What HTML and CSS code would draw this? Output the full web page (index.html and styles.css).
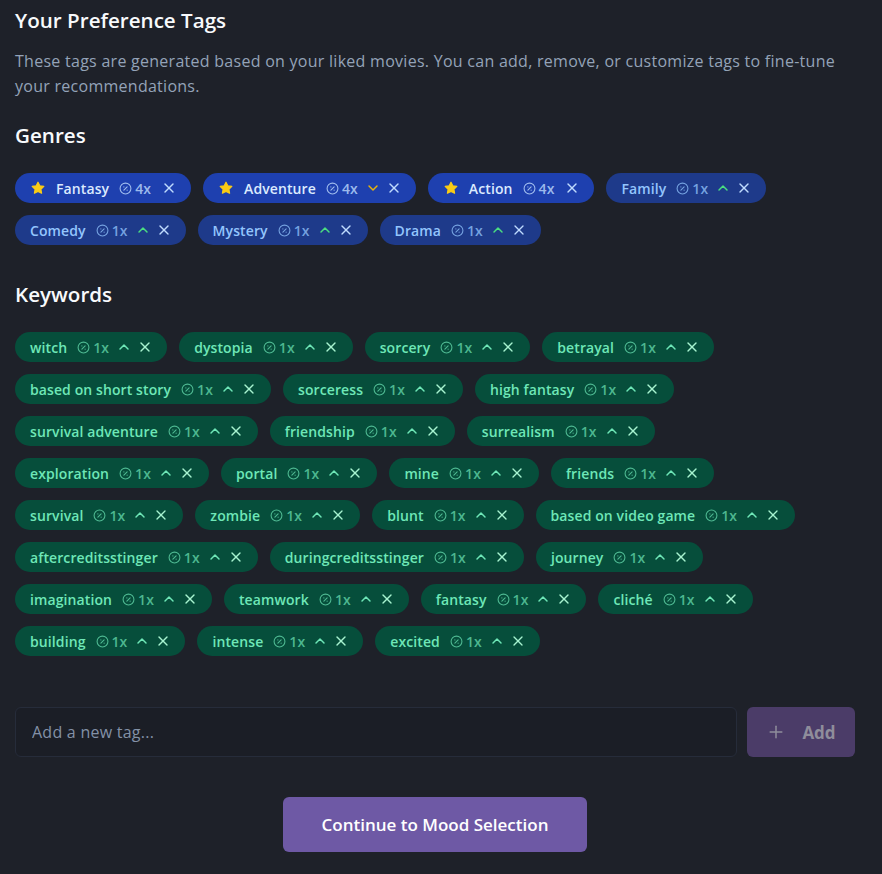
FILE: index.html
```html
<!DOCTYPE html>
<html lang="en">
<head>
<meta charset="utf-8">
<title>Your Preference Tags</title>
<link rel="stylesheet" href="styles.css">
</head>
<body>
<svg width="0" height="0" class="defs" aria-hidden="true">
  <defs>
    <symbol id="i-count" viewBox="0 0 24 24"><circle cx="12" cy="12" r="10"/><path d="m15 9-6 6"/><path d="M9 9h.01"/><path d="M15 15h.01"/></symbol>
    <symbol id="i-up" viewBox="0 0 24 24"><path d="m18 15-6-6-6 6"/></symbol>
    <symbol id="i-down" viewBox="0 0 24 24"><path d="m6 9 6 6 6-6"/></symbol>
    <symbol id="i-x" viewBox="0 0 24 24"><path d="M18 6 6 18"/><path d="m6 6 12 12"/></symbol>
    <symbol id="i-star" viewBox="0 0 24 24"><path d="M12 2l3.09 6.26L22 9.27l-5 4.87 1.18 6.88L12 17.77l-6.18 3.25L7 14.14 2 9.27l6.91-1.01L12 2z"/></symbol>
  </defs>
</svg>
<main class="page">
  <h2 class="title">Your Preference Tags</h2>
  <p class="desc">These tags are generated based on your liked movies. You can add, remove, or customize tags to fine-tune your recommendations.</p>

  <h3 class="section">Genres</h3>
  <div class="tags">
    <span class="tag genre star"><svg class="ico star-ico"><use href="#i-star"/></svg><span class="name">Fantasy</span><span class="count"><svg class="ico c-ico"><use href="#i-count"/></svg>4x</span><svg class="ico x-ico"><use href="#i-x"/></svg></span>
    <span class="tag genre star"><svg class="ico star-ico"><use href="#i-star"/></svg><span class="name">Adventure</span><span class="count"><svg class="ico c-ico"><use href="#i-count"/></svg>4x</span><svg class="ico down-ico"><use href="#i-down"/></svg><svg class="ico x-ico"><use href="#i-x"/></svg></span>
    <span class="tag genre star"><svg class="ico star-ico"><use href="#i-star"/></svg><span class="name">Action</span><span class="count"><svg class="ico c-ico"><use href="#i-count"/></svg>4x</span><svg class="ico x-ico"><use href="#i-x"/></svg></span>
    <span class="tag genre"><span class="name">Family</span><span class="count"><svg class="ico c-ico"><use href="#i-count"/></svg>1x</span><svg class="ico up-ico"><use href="#i-up"/></svg><svg class="ico x-ico"><use href="#i-x"/></svg></span>
    <span class="tag genre"><span class="name">Comedy</span><span class="count"><svg class="ico c-ico"><use href="#i-count"/></svg>1x</span><svg class="ico up-ico"><use href="#i-up"/></svg><svg class="ico x-ico"><use href="#i-x"/></svg></span>
    <span class="tag genre"><span class="name">Mystery</span><span class="count"><svg class="ico c-ico"><use href="#i-count"/></svg>1x</span><svg class="ico up-ico"><use href="#i-up"/></svg><svg class="ico x-ico"><use href="#i-x"/></svg></span>
    <span class="tag genre"><span class="name">Drama</span><span class="count"><svg class="ico c-ico"><use href="#i-count"/></svg>1x</span><svg class="ico up-ico"><use href="#i-up"/></svg><svg class="ico x-ico"><use href="#i-x"/></svg></span>
  </div>

  <h3 class="section kw-head">Keywords</h3>
  <div class="tags" id="kw">
    <span class="tag kw"><span class="name">witch</span><span class="count"><svg class="ico c-ico"><use href="#i-count"/></svg>1x</span><svg class="ico up-ico"><use href="#i-up"/></svg><svg class="ico x-ico"><use href="#i-x"/></svg></span>
    <span class="tag kw"><span class="name">dystopia</span><span class="count"><svg class="ico c-ico"><use href="#i-count"/></svg>1x</span><svg class="ico up-ico"><use href="#i-up"/></svg><svg class="ico x-ico"><use href="#i-x"/></svg></span>
    <span class="tag kw"><span class="name">sorcery</span><span class="count"><svg class="ico c-ico"><use href="#i-count"/></svg>1x</span><svg class="ico up-ico"><use href="#i-up"/></svg><svg class="ico x-ico"><use href="#i-x"/></svg></span>
    <span class="tag kw"><span class="name">betrayal</span><span class="count"><svg class="ico c-ico"><use href="#i-count"/></svg>1x</span><svg class="ico up-ico"><use href="#i-up"/></svg><svg class="ico x-ico"><use href="#i-x"/></svg></span>
    <span class="tag kw"><span class="name">based on short story</span><span class="count"><svg class="ico c-ico"><use href="#i-count"/></svg>1x</span><svg class="ico up-ico"><use href="#i-up"/></svg><svg class="ico x-ico"><use href="#i-x"/></svg></span>
    <span class="tag kw"><span class="name">sorceress</span><span class="count"><svg class="ico c-ico"><use href="#i-count"/></svg>1x</span><svg class="ico up-ico"><use href="#i-up"/></svg><svg class="ico x-ico"><use href="#i-x"/></svg></span>
    <span class="tag kw"><span class="name">high fantasy</span><span class="count"><svg class="ico c-ico"><use href="#i-count"/></svg>1x</span><svg class="ico up-ico"><use href="#i-up"/></svg><svg class="ico x-ico"><use href="#i-x"/></svg></span>
    <span class="tag kw"><span class="name">survival adventure</span><span class="count"><svg class="ico c-ico"><use href="#i-count"/></svg>1x</span><svg class="ico up-ico"><use href="#i-up"/></svg><svg class="ico x-ico"><use href="#i-x"/></svg></span>
    <span class="tag kw"><span class="name">friendship</span><span class="count"><svg class="ico c-ico"><use href="#i-count"/></svg>1x</span><svg class="ico up-ico"><use href="#i-up"/></svg><svg class="ico x-ico"><use href="#i-x"/></svg></span>
    <span class="tag kw"><span class="name">surrealism</span><span class="count"><svg class="ico c-ico"><use href="#i-count"/></svg>1x</span><svg class="ico up-ico"><use href="#i-up"/></svg><svg class="ico x-ico"><use href="#i-x"/></svg></span>
    <span class="tag kw"><span class="name">exploration</span><span class="count"><svg class="ico c-ico"><use href="#i-count"/></svg>1x</span><svg class="ico up-ico"><use href="#i-up"/></svg><svg class="ico x-ico"><use href="#i-x"/></svg></span>
    <span class="tag kw"><span class="name">portal</span><span class="count"><svg class="ico c-ico"><use href="#i-count"/></svg>1x</span><svg class="ico up-ico"><use href="#i-up"/></svg><svg class="ico x-ico"><use href="#i-x"/></svg></span>
    <span class="tag kw"><span class="name">mine</span><span class="count"><svg class="ico c-ico"><use href="#i-count"/></svg>1x</span><svg class="ico up-ico"><use href="#i-up"/></svg><svg class="ico x-ico"><use href="#i-x"/></svg></span>
    <span class="tag kw"><span class="name">friends</span><span class="count"><svg class="ico c-ico"><use href="#i-count"/></svg>1x</span><svg class="ico up-ico"><use href="#i-up"/></svg><svg class="ico x-ico"><use href="#i-x"/></svg></span>
    <span class="tag kw"><span class="name">survival</span><span class="count"><svg class="ico c-ico"><use href="#i-count"/></svg>1x</span><svg class="ico up-ico"><use href="#i-up"/></svg><svg class="ico x-ico"><use href="#i-x"/></svg></span>
    <span class="tag kw"><span class="name">zombie</span><span class="count"><svg class="ico c-ico"><use href="#i-count"/></svg>1x</span><svg class="ico up-ico"><use href="#i-up"/></svg><svg class="ico x-ico"><use href="#i-x"/></svg></span>
    <span class="tag kw"><span class="name">blunt</span><span class="count"><svg class="ico c-ico"><use href="#i-count"/></svg>1x</span><svg class="ico up-ico"><use href="#i-up"/></svg><svg class="ico x-ico"><use href="#i-x"/></svg></span>
    <span class="tag kw"><span class="name">based on video game</span><span class="count"><svg class="ico c-ico"><use href="#i-count"/></svg>1x</span><svg class="ico up-ico"><use href="#i-up"/></svg><svg class="ico x-ico"><use href="#i-x"/></svg></span>
    <span class="tag kw"><span class="name">aftercreditsstinger</span><span class="count"><svg class="ico c-ico"><use href="#i-count"/></svg>1x</span><svg class="ico up-ico"><use href="#i-up"/></svg><svg class="ico x-ico"><use href="#i-x"/></svg></span>
    <span class="tag kw"><span class="name">duringcreditsstinger</span><span class="count"><svg class="ico c-ico"><use href="#i-count"/></svg>1x</span><svg class="ico up-ico"><use href="#i-up"/></svg><svg class="ico x-ico"><use href="#i-x"/></svg></span>
    <span class="tag kw"><span class="name">journey</span><span class="count"><svg class="ico c-ico"><use href="#i-count"/></svg>1x</span><svg class="ico up-ico"><use href="#i-up"/></svg><svg class="ico x-ico"><use href="#i-x"/></svg></span>
    <span class="tag kw"><span class="name">imagination</span><span class="count"><svg class="ico c-ico"><use href="#i-count"/></svg>1x</span><svg class="ico up-ico"><use href="#i-up"/></svg><svg class="ico x-ico"><use href="#i-x"/></svg></span>
    <span class="tag kw"><span class="name">teamwork</span><span class="count"><svg class="ico c-ico"><use href="#i-count"/></svg>1x</span><svg class="ico up-ico"><use href="#i-up"/></svg><svg class="ico x-ico"><use href="#i-x"/></svg></span>
    <span class="tag kw"><span class="name">fantasy</span><span class="count"><svg class="ico c-ico"><use href="#i-count"/></svg>1x</span><svg class="ico up-ico"><use href="#i-up"/></svg><svg class="ico x-ico"><use href="#i-x"/></svg></span>
    <span class="tag kw"><span class="name">cliché</span><span class="count"><svg class="ico c-ico"><use href="#i-count"/></svg>1x</span><svg class="ico up-ico"><use href="#i-up"/></svg><svg class="ico x-ico"><use href="#i-x"/></svg></span>
    <span class="tag kw"><span class="name">building</span><span class="count"><svg class="ico c-ico"><use href="#i-count"/></svg>1x</span><svg class="ico up-ico"><use href="#i-up"/></svg><svg class="ico x-ico"><use href="#i-x"/></svg></span>
    <span class="tag kw"><span class="name">intense</span><span class="count"><svg class="ico c-ico"><use href="#i-count"/></svg>1x</span><svg class="ico up-ico"><use href="#i-up"/></svg><svg class="ico x-ico"><use href="#i-x"/></svg></span>
    <span class="tag kw"><span class="name">excited</span><span class="count"><svg class="ico c-ico"><use href="#i-count"/></svg>1x</span><svg class="ico up-ico"><use href="#i-up"/></svg><svg class="ico x-ico"><use href="#i-x"/></svg></span>
  </div>

  <div class="add-row">
    <input class="add-input" type="text" placeholder="Add a new tag...">
    <button class="add-btn" type="button"><svg class="plus-ico" viewBox="0 0 24 24"><path d="M5 12h14"/><path d="M12 5v14"/></svg><span>Add</span></button>
  </div>

  <div class="continue-wrap">
    <button class="continue-btn" type="button">Continue to Mood Selection</button>
  </div>
</main>
</body>
</html>
```

FILE: styles.css
```css
* { box-sizing: border-box; }

html, body {
  margin: 0;
  background: #1e2129;
}

body {
  font-family: "Open Sans", "Noto Sans", sans-serif;
  color: #f8fafc;
}

.defs { position: absolute; width: 0; height: 0; overflow: hidden; }

.page {
  width: 840px;
  margin-left: 15px;
  padding-top: 6px;
}

.title {
  margin: 0;
  font-size: 20.6px;
  line-height: 28px;
  font-weight: 600;
}

.desc {
  margin: 15px 0 0;
  font-size: 16px;
  line-height: 25px;
  color: #94a3b8;
  letter-spacing: 0.27px;
}

.section {
  margin: 22px 0 0;
  font-size: 20.6px;
  line-height: 28px;
  font-weight: 600;
}

.kw-head { margin-top: 35px; }

.tags {
  margin-top: 24px;
  display: flex;
  flex-wrap: wrap;
  gap: 12px;
}

.tag {
  display: inline-flex;
  align-items: center;
  height: 30px;
  padding: 0 14px 0 15px;
  border-radius: 15px;
  font-size: 14px;
  font-weight: 600;
  letter-spacing: 0.1px;
  white-space: nowrap;
}

.ico {
  fill: none;
  stroke: currentColor;
  stroke-width: 2;
  stroke-linecap: round;
  stroke-linejoin: round;
  flex: none;
}

.star-ico {
  width: 14px;
  height: 14px;
  fill: #facc15;
  stroke: #facc15;
  margin-right: 11px;
  margin-left: 1px;
}

.count {
  display: inline-flex;
  align-items: center;
  gap: 3px;
  margin-left: 10px;
}

.c-ico { width: 13px; height: 13px; stroke-width: 2; }

.up-ico, .down-ico {
  width: 16px;
  height: 16px;
  margin-left: 7px;
  stroke-width: 2.2;
}

.x-ico {
  width: 16px;
  height: 16px;
  margin-left: 5px;
  stroke-width: 2;
}

.count + .x-ico { margin-left: 10px; }

/* genre tags */
.genre { background: #1e3a8a; color: #93c5fd; }
.genre .count { color: rgba(147, 197, 253, 0.75); }
.genre .x-ico { color: #bfdbfe; }
.genre .up-ico { color: #4ade80; }

.genre.star { background: #1e40af; color: #dbeafe; }
.genre.star .count { color: rgba(191, 219, 254, 0.8); }
.genre .down-ico { color: #eab308; }

/* keyword tags */
.kw { background: #064e3b; color: #6ee7b7; }
.kw .count { color: rgba(110, 231, 183, 0.7); }
.kw .up-ico { color: #6ee7b7; }
.kw .x-ico { color: #a7f3d0; }

/* add row */
.add-row {
  margin-top: 51px;
  display: flex;
  gap: 10px;
}

.add-input {
  flex: 1;
  height: 50px;
  background: #1b1e26;
  border: 1px solid #262c3a;
  border-radius: 6px;
  padding: 0 16px;
  font-family: inherit;
  font-size: 16px;
  letter-spacing: 0.25px;
  color: #e2e8f0;
  outline: none;
}

.add-input::placeholder { color: #8391a7; }

.add-btn {
  width: 108px;
  height: 50px;
  border: 0;
  border-radius: 6px;
  background: #4b3c68;
  color: #8f8d9b;
  display: flex;
  align-items: center;
  justify-content: center;
  gap: 16px;
  font-family: inherit;
  font-size: 17px;
  font-weight: 700;
  padding: 0;
}

.plus-ico {
  width: 20px;
  height: 20px;
  fill: none;
  stroke: currentColor;
  stroke-width: 1.8;
  stroke-linecap: round;
}

.continue-wrap {
  margin-top: 40px;
  display: flex;
  justify-content: center;
}

.continue-btn {
  width: 304px;
  height: 55px;
  border: 0;
  border-radius: 6px;
  background: #6e59a5;
  color: #ffffff;
  font-family: inherit;
  font-size: 17px;
  font-weight: 600;
}
```
